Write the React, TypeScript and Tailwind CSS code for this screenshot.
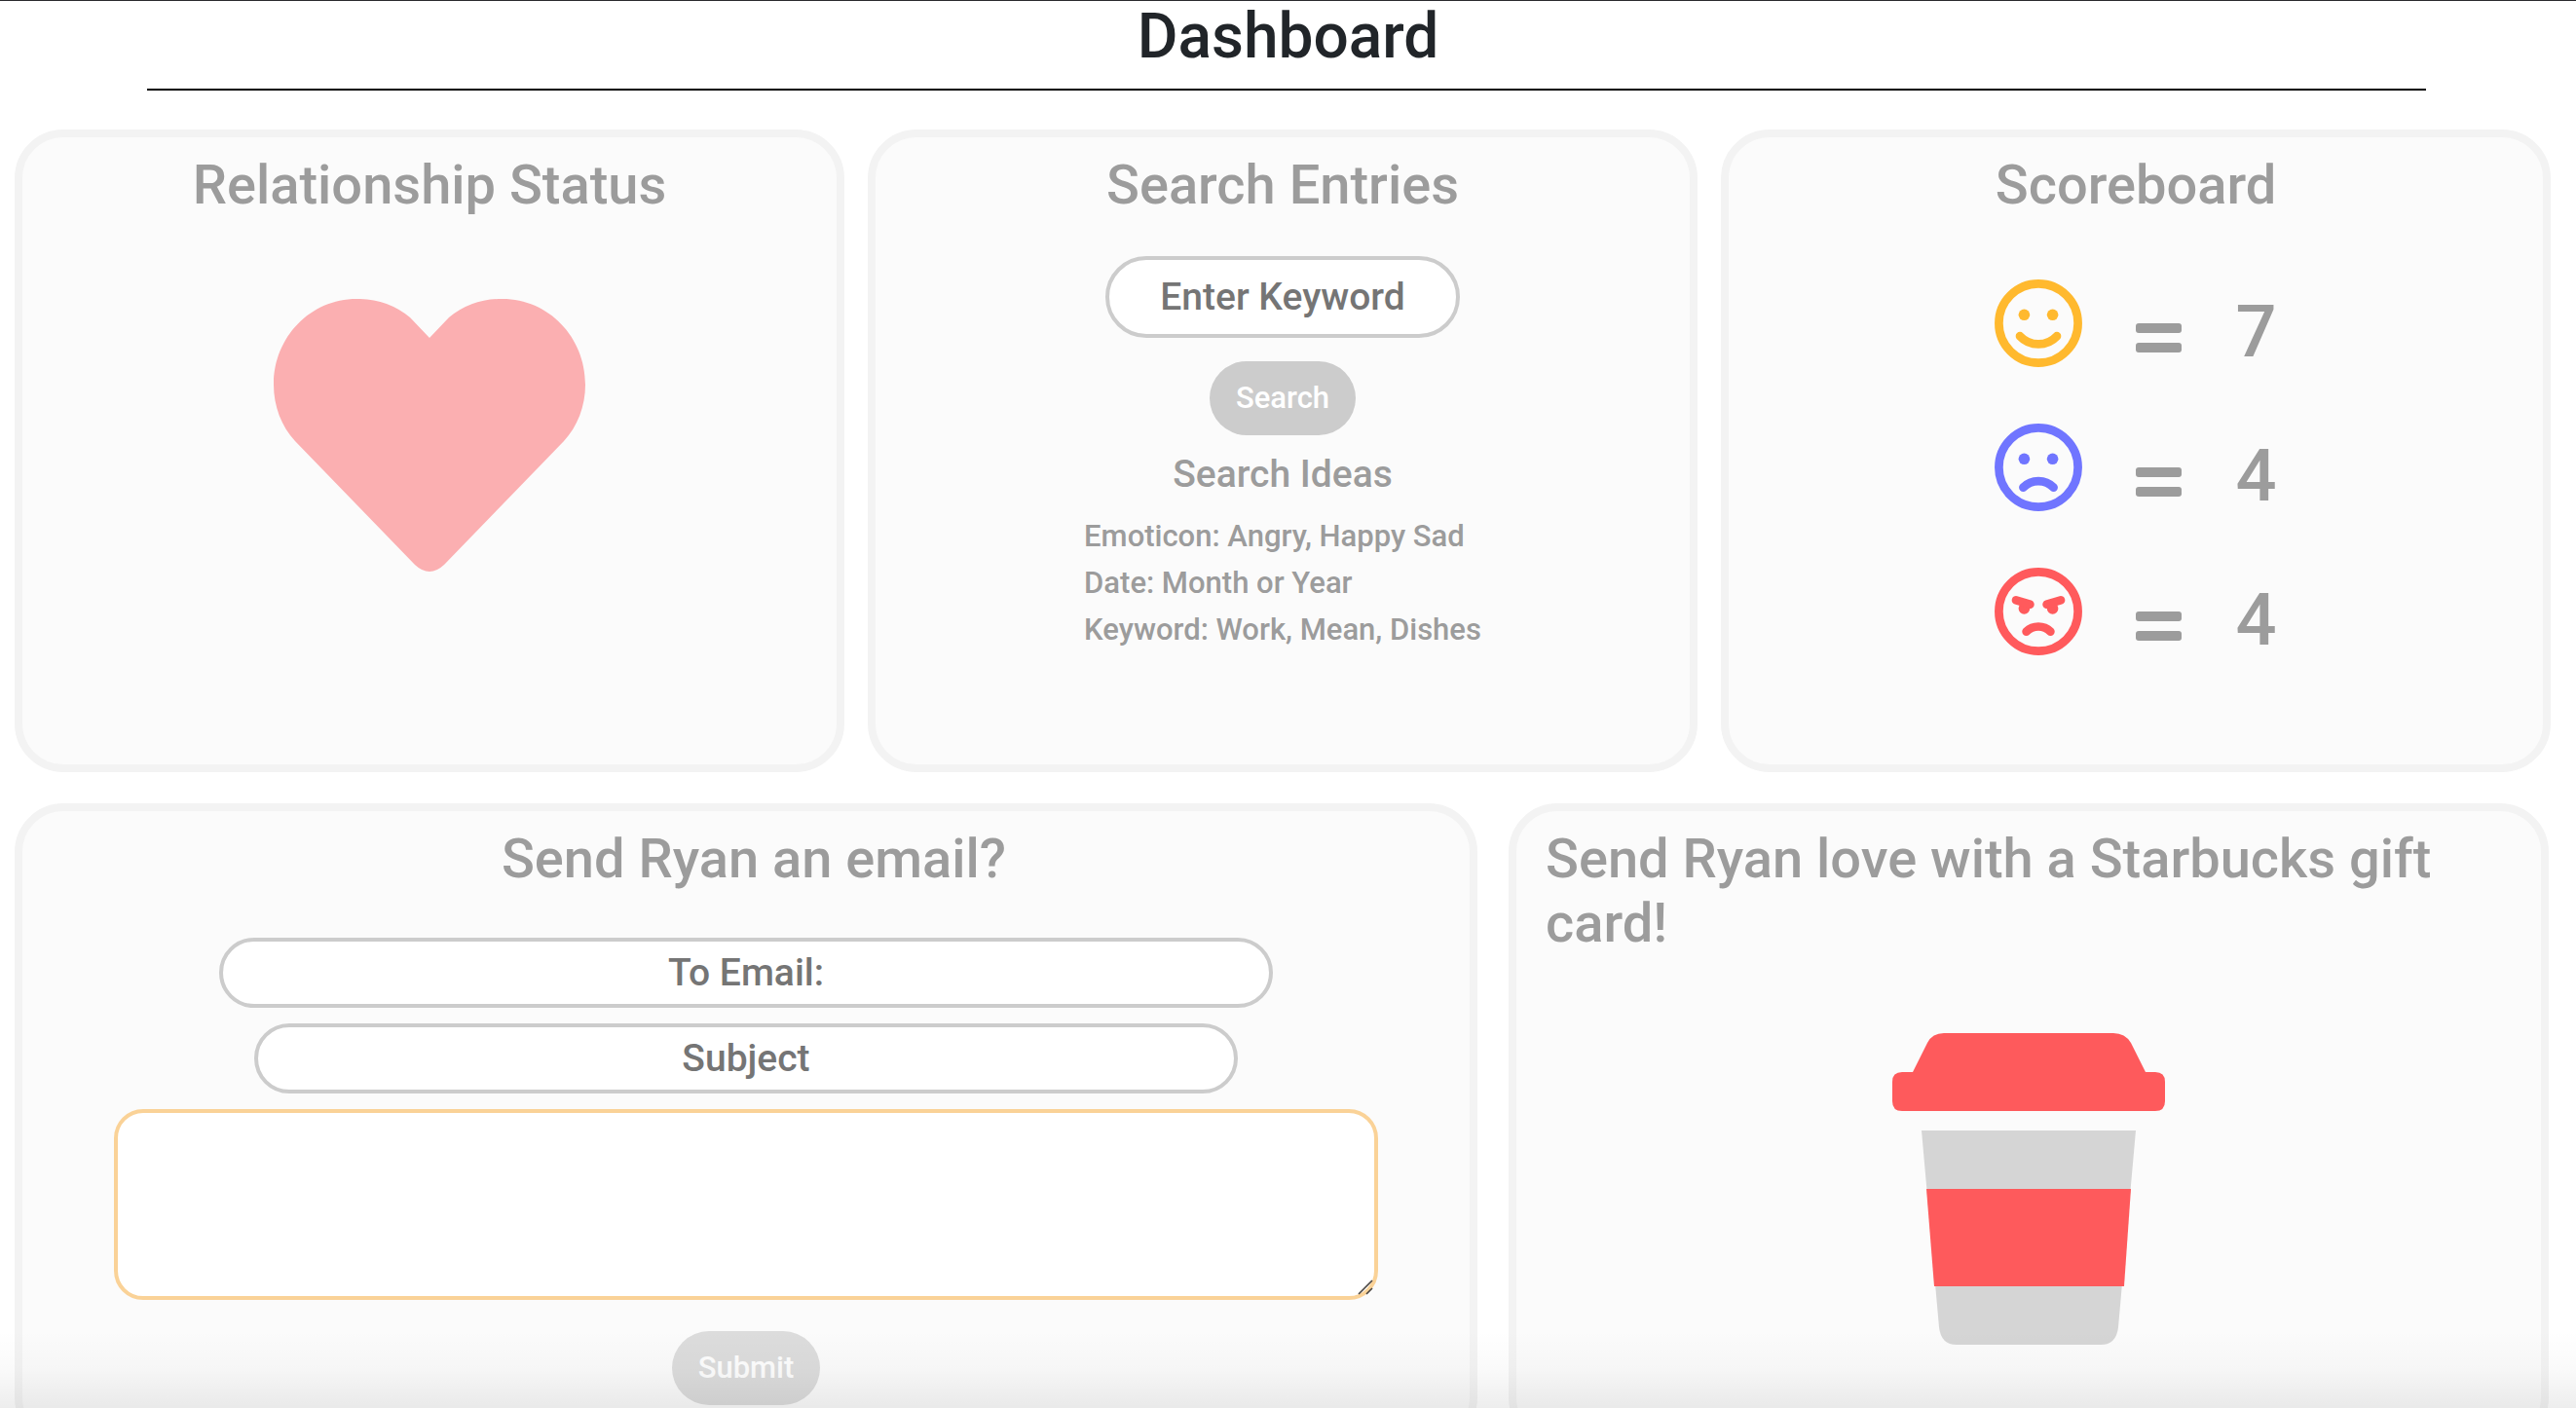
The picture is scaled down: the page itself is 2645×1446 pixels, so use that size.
import type { ReactNode } from "react";

function Card({ className = "", children }: { className?: string; children: ReactNode }) {
  return (
    <section
      className={`flex min-h-[660px] flex-col rounded-[50px] border-8 border-[#f3f3f3] bg-[#fbfbfb] px-[22px] pt-4 ${className}`}
    >
      {children}
    </section>
  );
}

function CardTitle({ className = "", children }: { className?: string; children: ReactNode }) {
  return <h2 className={`text-[56px] leading-[66px] font-medium ${className}`}>{children}</h2>;
}

function Heart() {
  return (
    <svg className="h-[280px] w-[320px]" viewBox="0 0 320 280" fill="#fbafb1" role="img" aria-label="Heart">
      <path d="M160 40L140 19A84 84 0 0 0 85 0C38 0 0 39 0 88C0 110 8 131 22 146L145 273Q160 287 175 273L298 146C312 131 320 110 320 88C320 39 282 0 235 0A84 84 0 0 0 180 19Z" />
    </svg>
  );
}

type Mood = "happy" | "sad" | "angry";

const moodColor: Record<Mood, string> = {
  happy: "text-[#ffb92e]",
  sad: "text-[#7075ff]",
  angry: "text-[#ff5a5c]",
};

function Face({ mood }: { mood: Mood }) {
  const eyeY = mood === "angry" ? 42 : 36.3;
  return (
    <svg
      className={`h-[90px] w-[90px] ${moodColor[mood]}`}
      viewBox="0 0 90 90"
      fill="none"
      stroke="currentColor"
      strokeWidth="8.7"
      strokeLinecap="round"
      role="img"
      aria-label={mood}
    >
      <circle cx="45" cy="45" r="40.6" />
      <circle cx="30.4" cy={eyeY} r="5.8" fill="currentColor" stroke="none" />
      <circle cx="59.6" cy={eyeY} r="5.8" fill="currentColor" stroke="none" />
      {mood === "happy" && <path d="M26 58.2A26 26 0 0 0 64 58.2" />}
      {mood === "sad" && <path d="M29.4 65.6A22 22 0 0 1 60.6 65.6" />}
      {mood === "angry" && (
        <>
          <path d="M22 33.4L36.4 37.7M68 33.4L53.6 37.7" />
          <path d="M32.6 65.6A17.6 17.6 0 0 1 57.4 65.6" />
        </>
      )}
    </svg>
  );
}

function EqualsIcon() {
  return (
    <svg className="mb-[15px] h-[30px] w-[47px]" viewBox="0 0 47 30" fill="currentColor" role="img" aria-label="equals">
      <rect width="47" height="10" rx="3" />
      <rect y="20" width="47" height="10" rx="3" />
    </svg>
  );
}

function CoffeeCup() {
  return (
    <svg className="h-[320px] w-[280px]" viewBox="0 0 280 320" role="img" aria-label="Coffee cup">
      <path fill="#d5d5d5" d="M30 100H250L232 302Q230 320 214 320H66Q50 320 48 302Z" />
      <path fill="#fe5a5c" d="M35 160H245L238 260H43Z" />
      <path
        fill="#fe5a5c"
        d="M10 40H21L36 10Q41 0 53 0H227Q239 0 245 10L260 40H270Q280 40 280 50V70Q280 80 270 80H10Q0 80 0 70V50Q0 40 10 40Z"
      />
    </svg>
  );
}

const scores: { mood: Mood; count: number }[] = [
  { mood: "happy", count: 7 },
  { mood: "sad", count: 4 },
  { mood: "angry", count: 4 },
];

export default function App() {
  return (
    <main className="relative h-screen overflow-hidden border-t border-[#2a2a2e] bg-white font-['Roboto','Liberation_Sans',sans-serif] font-medium text-[#9c9c9c]">
      <h1 className="text-center text-[64px] leading-[74px] font-medium text-[#212529]">Dashboard</h1>
      <hr className="mt-4 mr-[154px] ml-[151px] border-t-2 border-black" />

      <div className="mt-10 mr-[26px] ml-[15px] grid grid-cols-3 gap-6">
        <Card className="items-center">
          <CardTitle>Relationship Status</CardTitle>
          <div className="mt-[84px]">
            <Heart />
          </div>
        </Card>

        <Card className="items-center">
          <CardTitle>Search Entries</CardTitle>
          <form className="mt-10 flex flex-col items-center gap-6" onSubmit={(e) => e.preventDefault()}>
            <input
              type="text"
              aria-label="Enter Keyword"
              placeholder="Enter Keyword"
              className="h-[84px] w-[364px] rounded-full border-4 border-[#ccc] bg-white text-center text-[39px] placeholder:text-[#757575]"
            />
            <button type="submit" className="h-[76px] rounded-full bg-[#ccc] px-[27px] text-[31px] text-white">
              Search
            </button>
          </form>
          <h3 className="mt-4 text-[39px] leading-[48px]">Search Ideas</h3>
          <ul className="mt-4 text-[31px] leading-[48px]">
            <li>Emoticon: Angry, Happy Sad</li>
            <li>Date: Month or Year</li>
            <li>Keyword: Work, Mean, Dishes</li>
          </ul>
        </Card>

        <Card className="items-center">
          <CardTitle>Scoreboard</CardTitle>
          <ul className="mt-16 flex flex-col gap-[58px]">
            {scores.map(({ mood, count }) => (
              <li key={mood} className="flex items-end gap-[55px]">
                <Face mood={mood} />
                <EqualsIcon />
                <span className="text-[74px] leading-[72px]">{count}</span>
              </li>
            ))}
          </ul>
        </Card>
      </div>

      <div className="mt-8 mr-7 ml-[15px] grid grid-cols-[1502fr_1068fr] gap-8">
        <Card>
          <CardTitle className="pl-4 text-center">Send Ryan an email?</CardTitle>
          <form className="mt-12 flex flex-col items-center gap-4" onSubmit={(e) => e.preventDefault()}>
            <input
              type="email"
              aria-label="To Email"
              placeholder="To Email:"
              className="h-[72px] w-3/4 rounded-full border-4 border-[#ccc] bg-white text-center text-[39px] placeholder:text-[#757575]"
            />
            <input
              type="text"
              aria-label="Subject"
              placeholder="Subject"
              className="h-[72px] w-[70%] rounded-full border-4 border-[#ccc] bg-white text-center text-[39px] placeholder:text-[#757575]"
            />
            <div className="relative flex w-[90%]">
              <textarea
                aria-label="Message"
                className="h-[196px] w-full resize-none rounded-[30px] border-4 border-[#fad297] bg-white p-4 text-[31px]"
              />
              <svg
                className="pointer-events-none absolute right-[5px] bottom-[5px] h-4 w-4"
                viewBox="0 0 16 16"
                stroke="#4a4541"
                strokeWidth="1.6"
                aria-hidden="true"
              >
                <path d="M1 15L15 1M9 15L15 9" />
              </svg>
            </div>
            <button
              type="submit"
              className="mt-4 h-[76px] rounded-full bg-[#dcdcdc] px-[27px] text-[31px] text-[#fdfdfd]"
            >
              Submit
            </button>
          </form>
        </Card>

        <Card>
          <CardTitle className="px-2">Send Ryan love with a Starbucks gift card!</CardTitle>
          <div className="mt-20 flex justify-center">
            <CoffeeCup />
          </div>
        </Card>
      </div>

      <div className="pointer-events-none absolute inset-x-0 bottom-0 h-20 bg-linear-to-b from-transparent via-black/2 to-black/7" />
    </main>
  );
}
